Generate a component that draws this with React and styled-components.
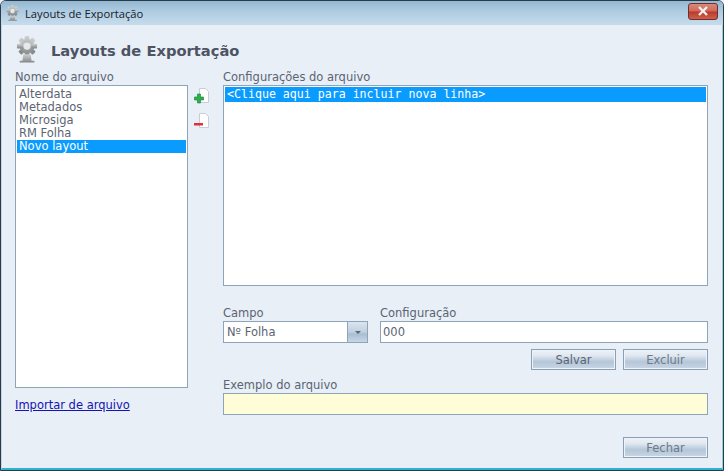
import React from 'react'
import styled, { createGlobalStyle } from 'styled-components'

const GlobalStyle = createGlobalStyle`
  html, body {
    margin: 0;
    padding: 0;
    background: #e8eff7;
  }
`

const Window = styled.div`
  box-sizing: border-box;
  width: 724px;
  height: 471px;
  display: flex;
  flex-direction: column;
  background: #e8eff7;
  border: 1px solid #2c3a44;
  border-top-left-radius: 6px;
  border-top-right-radius: 6px;
  font-family: 'DejaVu Sans', Verdana, sans-serif;
  font-size: 11.5px;
  color: #5b6472;
  overflow: hidden;
`

const TitleBar = styled.div`
  height: 24px;
  flex: none;
  display: flex;
  align-items: center;
  padding: 0 5px 0 5px;
  background: linear-gradient(to bottom, #93b7d3 0%, #b0cce1 45%, #c6dcec 100%);
  font-family: 'Open Sans', sans-serif;
  font-size: 11.2px;
  color: #10202c;
`

const TitleText = styled.span`
  margin-left: 6px;
  flex: 1;
`

const CloseButton = styled.div`
  width: 30px;
  height: 17px;
  margin-top: -4px;
  border: 1px solid #6b2f33;
  border-radius: 3px;
  box-sizing: border-box;
  display: flex;
  align-items: center;
  justify-content: center;
  background: linear-gradient(to bottom, #d98a78 0%, #d0675a 48%, #b83a28 52%, #d0604a 100%);
`

const Client = styled.div`
  flex: 1;
  display: flex;
  flex-direction: column;
  padding: 11px 14px 0 13px;
  border-left: 1px solid #c4d6e6;
  border-right: 1px solid #8fd0e0;
  border-bottom: 2px solid #28b4d4;
`

const Heading = styled.div`
  height: 28px;
  display: flex;
  align-items: center;
  gap: 13px;
  padding-left: 1px;
  font-size: 14.7px;
  font-weight: bold;
  color: #4e5364;
`

const Columns = styled.div`
  flex: 1;
  margin-top: 6px;
  display: grid;
  grid-template-columns: 173px 35px 485px;
`

const LeftColumn = styled.div`
  display: flex;
  flex-direction: column;
`

const RightColumn = styled.div`
  display: flex;
  flex-direction: column;
`

const Label = styled.div`
  height: 15px;
  line-height: 14px;
  white-space: nowrap;
  margin-top: ${(p) => p.$top || '0'};
`

const ListBox = styled.div`
  box-sizing: border-box;
  height: 303px;
  padding: 2px 1px;
  background: #fff;
  border: 1px solid #8ea4b8;
`

const ListItem = styled.div`
  height: 13px;
  line-height: 13px;
  padding-left: 2px;
  color: ${(p) => (p.$selected ? '#fff' : '#5b6472')};
  background: ${(p) => (p.$selected ? '#0a9bff' : 'transparent')};
`

const ImportLink = styled.a`
  margin-top: 10px;
  color: #1414b4;
  text-decoration: underline;
  line-height: 14px;
  align-self: flex-start;
`

const IconColumn = styled.div`
  display: flex;
  flex-direction: column;
  align-items: flex-start;
  gap: 8px;
  padding: 17px 0 0 6px;
`

const ConfigBox = styled.div`
  box-sizing: border-box;
  height: 201px;
  padding: 1px;
  background: #fff;
  border: 1px solid #8ea4b8;
`

const ConfigLine = styled.div`
  height: 15px;
  line-height: 14px;
  padding-left: 2px;
  background: #0a9bff;
  color: #fff;
  font-family: 'DejaVu Sans Mono', monospace;
  font-size: 11.6px;
  white-space: nowrap;
`

const FieldRow = styled.div`
  display: flex;
  gap: 12px;
  margin-top: 20px;
`

const Field = styled.div`
  display: flex;
  flex-direction: column;
  width: ${(p) => p.$width || 'auto'};
  flex: ${(p) => (p.$grow ? 1 : 'none')};
`

const ComboBox = styled.div`
  box-sizing: border-box;
  height: 22px;
  display: flex;
  background: #fff;
  border: 1px solid #8ea4b8;
`

const ComboText = styled.div`
  flex: 1;
  padding-left: 3px;
  line-height: 20px;
`

const ComboArrow = styled.div`
  width: 19px;
  display: flex;
  align-items: center;
  justify-content: center;
  border-left: 1px solid #8ea4b8;
  background: linear-gradient(to bottom, #dbe5ef 0%, #c0d0e0 50%, #a9bed2 60%, #c7d6e4 100%);
`

const Caret = styled.div`
  width: 0;
  height: 0;
  border-left: 3px solid transparent;
  border-right: 3px solid transparent;
  border-top: 3px solid #55697c;
`

const TextInput = styled.div`
  box-sizing: border-box;
  height: 22px;
  padding-left: 2px;
  line-height: 20px;
  background: ${(p) => p.$bg || '#fff'};
  border: 1px solid #8ea4b8;
`

const ButtonRow = styled.div`
  display: flex;
  justify-content: flex-end;
  gap: 7px;
  margin-top: ${(p) => p.$top};
`

const Button = styled.div`
  box-sizing: border-box;
  width: 85px;
  height: 21px;
  display: flex;
  align-items: center;
  justify-content: center;
  border: 1px solid #8a9fb6;
  box-shadow: inset 0 0 0 1px #eef3f8;
  background: linear-gradient(to bottom, #eef3f8 0%, #dfe7f0 30%, #b4c6d9 62%, #c9d6e4 100%);
  color: ${(p) => (p.$muted ? '#6f7a88' : '#5b6472')};
`

function GearIcon({ id, size }) {
  return (
    <svg width={size} height={size * 1.25} viewBox="0 0 24 30">
      <defs>
        <linearGradient id={id} x1="0" y1="0" x2="0" y2="1">
          <stop offset="0" stopColor="#cfd1d1" />
          <stop offset="1" stopColor="#828687" />
        </linearGradient>
      </defs>
      <g fill={`url(#${id})`}>
        <circle cx="12" cy="11" r="8" />
        <rect x="9.5" y="0" width="5" height="22" rx="1" />
        <rect x="1" y="8.5" width="22" height="5" rx="1" />
        <rect x="9.5" y="0" width="5" height="22" rx="1" transform="rotate(45 12 11)" />
        <rect x="9.5" y="0" width="5" height="22" rx="1" transform="rotate(-45 12 11)" />
        <path d="M8 20h8l1 7h3v2H4v-2h3z" />
      </g>
      <circle cx="12" cy="11" r="4" fill="#e6e9eb" />
    </svg>
  )
}

function PageIcon({ minus }) {
  return (
    <svg width="16" height="17" viewBox="0 0 16 17">
      <path d="M5.5 1.5h6l3 3v11h-9z" fill="#fff" stroke="#c9ced4" />
      {minus ? (
        <rect x="0" y="11" width="9" height="2.5" fill="#e0303a" />
      ) : (
        <path d="M3.5 7h3v3h3v3h-3v3h-3v-3h-3v-3h3z" fill="#2cb04a" stroke="#15803a" strokeWidth="0.6" />
      )}
    </svg>
  )
}

function App() {
  return (
    <>
      <GlobalStyle />
      <Window>
        <TitleBar>
          <GearIcon id="gear-small" size={13} />
          <TitleText>Layouts de Exportação</TitleText>
          <CloseButton>
            <svg width="12" height="10" viewBox="0 0 12 10">
              <path d="M2 1l8 8M10 1L2 9" stroke="#f2f0f0" strokeWidth="2.4" />
            </svg>
          </CloseButton>
        </TitleBar>
        <Client>
          <Heading>
            <GearIcon id="gear-large" size={22} />
            Layouts de Exportação
          </Heading>
          <Columns>
            <LeftColumn>
              <Label>Nome do arquivo</Label>
              <ListBox>
                <ListItem>Alterdata</ListItem>
                <ListItem>Metadados</ListItem>
                <ListItem>Microsiga</ListItem>
                <ListItem>RM Folha</ListItem>
                <ListItem $selected>Novo layout</ListItem>
              </ListBox>
              <ImportLink href="#">Importar de arquivo</ImportLink>
            </LeftColumn>
            <IconColumn>
              <PageIcon />
              <PageIcon minus />
            </IconColumn>
            <RightColumn>
              <Label>Configurações do arquivo</Label>
              <ConfigBox>
                <ConfigLine>&lt;Clique aqui para incluir nova linha&gt;</ConfigLine>
              </ConfigBox>
              <FieldRow>
                <Field $width="145px">
                  <Label>Campo</Label>
                  <ComboBox>
                    <ComboText>Nº Folha</ComboText>
                    <ComboArrow>
                      <Caret />
                    </ComboArrow>
                  </ComboBox>
                </Field>
                <Field $grow>
                  <Label>Configuração</Label>
                  <TextInput>000</TextInput>
                </Field>
              </FieldRow>
              <ButtonRow $top="6px">
                <Button>Salvar</Button>
                <Button $muted>Excluir</Button>
              </ButtonRow>
              <Field>
                <Label $top="8px">Exemplo do arquivo</Label>
                <TextInput $bg="#fffdd8" />
              </Field>
              <ButtonRow $top="22px">
                <Button $muted>Fechar</Button>
              </ButtonRow>
            </RightColumn>
          </Columns>
        </Client>
      </Window>
    </>
  )
}

export default App
